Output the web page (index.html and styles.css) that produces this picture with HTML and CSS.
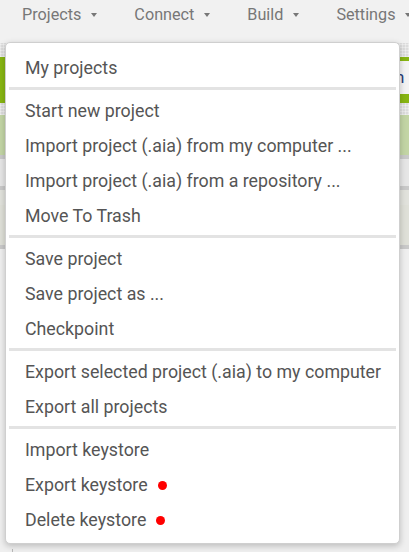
FILE: index.html
```html
<!DOCTYPE html>
<html>
<head>
<meta charset="utf-8">
<link rel="stylesheet" href="styles.css">
</head>
<body>
<div class="page">
  <nav class="topbar">
    <span class="top-item">Projects<span class="caret"></span></span>
    <span class="top-item">Connect<span class="caret"></span></span>
    <span class="top-item">Build<span class="caret"></span></span>
    <span class="top-item">Settings<span class="caret"></span></span>
  </nav>
  <div class="texture band-a"></div>
  <div class="greenbar">
    <div class="switch-btn">h</div>
  </div>
  <div class="texture band-b"></div>
  <div class="lightgreen"></div>
  <div class="panel-line"></div>
  <div class="panel p1"></div>
  <div class="panel-line"></div>
  <div class="panel p2"></div>
  <div class="panel p3"></div>
  <div class="panel-line"></div>
  <div class="workspace">
    <div class="ws-rule"></div>
    <div class="ws-box texture"></div>
  </div>

  <div class="dropdown">
    <div class="item">My projects</div>
    <div class="sep"></div>
    <div class="item">Start new project</div>
    <div class="item">Import project (.aia) from my computer ...</div>
    <div class="item">Import project (.aia) from a repository ...</div>
    <div class="item">Move To Trash</div>
    <div class="sep"></div>
    <div class="item">Save project</div>
    <div class="item">Save project as ...</div>
    <div class="item">Checkpoint</div>
    <div class="sep"></div>
    <div class="item">Export selected project (.aia) to my computer</div>
    <div class="item">Export all projects</div>
    <div class="sep"></div>
    <div class="item">Import keystore</div>
    <div class="item">Export keystore<span class="dot"></span></div>
    <div class="item">Delete keystore<span class="dot"></span></div>
  </div>
</div>
</body>
</html>
```

FILE: styles.css
```css
html, body {
  margin: 0;
  padding: 0;
}
body {
  font-family: Roboto, "Liberation Sans", sans-serif;
  background: #efefef;
  width: 409px;
  height: 552px;
  overflow: hidden;
}
.page {
  position: relative;
  width: 409px;
  height: 552px;
  overflow: hidden;
}
.topbar {
  height: 43px;
  background: #f1f1f1;
  display: flex;
  align-items: center;
  padding: 0 0 15px 22px;
  box-sizing: border-box;
  white-space: nowrap;
}
.top-item {
  color: #777777;
  font-size: 16.2px;
  margin-right: 37px;
  flex: none;
  display: flex;
  align-items: center;
}
.caret {
  display: inline-block;
  width: 0;
  height: 0;
  border-left: 3px solid transparent;
  border-right: 3px solid transparent;
  border-top: 4px solid #777777;
  margin-left: 10px;
  margin-top: 1px;
}
.texture {
  background-color: #dcdcdc;
  background-image: repeating-linear-gradient(90deg, rgba(255,255,255,0.35) 0 1px, transparent 1px 3px),
                    repeating-linear-gradient(0deg, rgba(255,255,255,0.35) 0 1px, transparent 1px 3px);
}
.band-a { height: 14px; }
.greenbar {
  height: 46px;
  background: #87b512;
  display: flex;
  justify-content: flex-end;
  align-items: center;
}
.switch-btn {
  width: 14px;
  height: 33px;
  margin-top: -6px;
  background: #f3f3f3;
  color: #2a3f7a;
  font-size: 17px;
  line-height: 33px;
  box-sizing: border-box;
}
.band-b { height: 12px; }
.lightgreen {
  height: 40px;
  background: #c3d5a5;
}
.panel-line {
  height: 4px;
  background: #c9c9c9;
}
.p1 { height: 27px; background: #e6e6e6; }
.p2 { height: 15px; background: #e1e2dc; }
.p3 { height: 40px; background: #dfe0d8; }
.workspace {
  height: 320px;
  background: #efefef;
  display: flex;
  align-items: flex-end;
  padding-left: 12px;
  gap: 4px;
}
.ws-rule {
  width: 1px;
  height: 20px;
  background: #b8b8b8;
}
.ws-box {
  width: 13px;
  height: 12px;
}

.dropdown {
  position: absolute;
  left: 5px;
  top: 42px;
  width: 395px;
  box-sizing: border-box;
  background: #ffffff;
  border: 1px solid #cfcfcf;
  border-radius: 5px;
  box-shadow: 0 2px 6px rgba(0,0,0,0.22);
  padding: 7px 2px 6px;
}
.item {
  height: 35px;
  padding-left: 17px;
  color: #555555;
  font-size: 17.8px;
  white-space: nowrap;
  display: flex;
  align-items: center;
}
.sep {
  height: 3px;
  background: #e3e3e3;
  margin: 2px 1px 3px;
}
.dot {
  display: inline-block;
  width: 9px;
  height: 9px;
  border-radius: 50%;
  background: #ff0000;
  margin-left: 10px;
  margin-top: 1px;
}
```
